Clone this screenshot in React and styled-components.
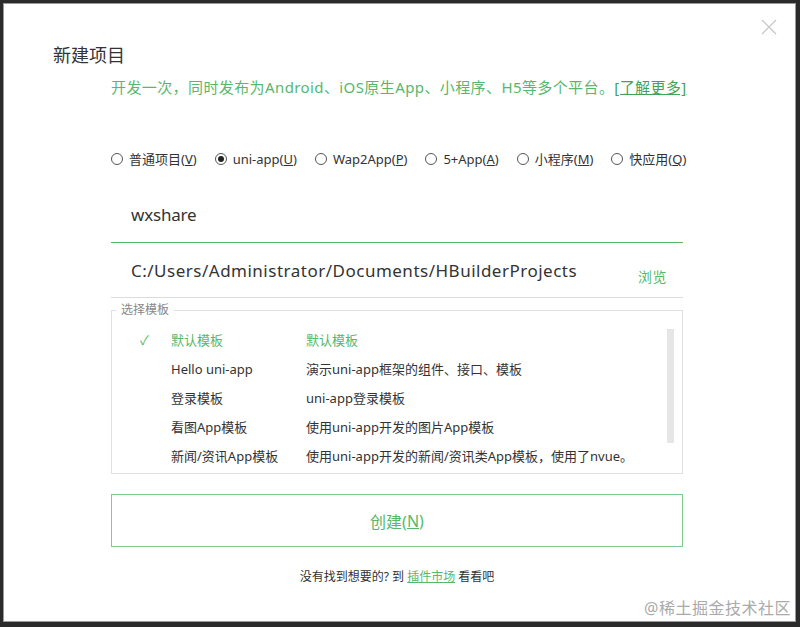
import React from 'react';
import styled, { createGlobalStyle } from 'styled-components';

const GREEN = '#56b86c';
const FONT = `"Noto Sans", "Noto Sans CJK SC", sans-serif`;

const radios = [
  { label: '普通项目', key: 'V' },
  { label: 'uni-app', key: 'U', checked: true },
  { label: 'Wap2App', key: 'P' },
  { label: '5+App', key: 'A' },
  { label: '小程序', key: 'M' },
  { label: '快应用', key: 'Q' },
];

const templates = [
  { name: '默认模板', desc: '默认模板', active: true },
  { name: 'Hello uni-app', desc: '演示uni-app框架的组件、接口、模板' },
  { name: '登录模板', desc: 'uni-app登录模板' },
  { name: '看图App模板', desc: '使用uni-app开发的图片App模板' },
  { name: '新闻/资讯App模板', desc: '使用uni-app开发的新闻/资讯类App模板，使用了nvue。' },
];

export default function App() {
  return (
    <>
      <GlobalStyle />
      <Frame>
        <Dialog>
          <CloseButton>
            <svg width="16" height="16" viewBox="0 0 16 16">
              <path d="M1 1 L15 15 M15 1 L1 15" stroke="#c8c8c8" strokeWidth="1.3" fill="none" />
            </svg>
          </CloseButton>
          <Title>新建项目</Title>
          <Body>
            <Intro>
              开发一次，同时发布为Android、iOS原生App、小程序、H5等多个平台。<MoreLink>[了解更多]</MoreLink>
            </Intro>
            <RadioRow>
              {radios.map((r) => (
                <RadioItem key={r.key}>
                  <RadioDot checked={r.checked} />
                  <span>
                    {r.label}(<u>{r.key}</u>)
                  </span>
                </RadioItem>
              ))}
            </RadioRow>
            <Field focused>
              <FieldText>wxshare</FieldText>
            </Field>
            <Field>
              <FieldText wide>C:/Users/Administrator/Documents/HBuilderProjects</FieldText>
              <Browse>浏览</Browse>
            </Field>
            <TemplateBox>
              <Legend>选择模板</Legend>
              <TemplateList>
                {templates.map((t) => (
                  <TemplateRow key={t.name} active={t.active}>
                    <Check>{t.active ? '✓' : ''}</Check>
                    <NameCell>{t.name}</NameCell>
                    <span>{t.desc}</span>
                  </TemplateRow>
                ))}
              </TemplateList>
              <ScrollThumb />
            </TemplateBox>
            <CreateButton>
              创建(<u>N</u>)
            </CreateButton>
            <Footer>
              没有找到想要的? 到 <MarketLink>插件市场</MarketLink> 看看吧
            </Footer>
          </Body>
          <Watermark>@稀土掘金技术社区</Watermark>
        </Dialog>
      </Frame>
    </>
  );
}

const GlobalStyle = createGlobalStyle`
  html, body {
    margin: 0;
    padding: 0;
    background: #2b2b2b;
  }
  body {
    font-family: ${FONT};
  }
`;

const Frame = styled.div`
  width: 800px;
  height: 627px;
  box-sizing: border-box;
  padding: 3px 4px 5px 3px;
  background: #2b2b2b;
`;

const Dialog = styled.div`
  position: relative;
  height: 100%;
  box-sizing: border-box;
  background: #fff;
  border: 1px solid #9a9a9a;
  padding: 39px 0 0 49px;
`;

const CloseButton = styled.div`
  position: absolute;
  top: 15px;
  right: 18px;
  width: 16px;
  height: 16px;
  display: flex;
`;

const Title = styled.div`
  font-size: 18px;
  color: #333;
  line-height: 24px;
`;

const Body = styled.div`
  width: 572px;
  margin-left: 58px;
  display: flex;
  flex-direction: column;
`;

const Intro = styled.div`
  margin-top: 10px;
  font-size: 15px;
  line-height: 20px;
  color: ${GREEN};
  white-space: nowrap;
  letter-spacing: 0.4px;
`;

const MoreLink = styled.span`
  color: #3fa35a;
  text-decoration: underline;
`;

const RadioRow = styled.div`
  margin-top: 53px;
  display: flex;
  align-items: center;
  gap: 18px;
  font-size: 13px;
  color: #333;
  white-space: nowrap;
`;

const RadioItem = styled.label`
  display: flex;
  align-items: center;
  gap: 6px;
  line-height: 18px;
`;

const RadioDot = styled.span`
  width: 12px;
  height: 12px;
  border-radius: 50%;
  border: 1px solid #555;
  box-sizing: border-box;
  display: flex;
  align-items: center;
  justify-content: center;
  &::after {
    content: '';
    width: 6px;
    height: 6px;
    border-radius: 50%;
    background: ${({ checked }) => (checked ? '#222' : 'transparent')};
  }
`;

const Field = styled.div`
  height: ${({ focused }) => (focused ? '56px' : '54px')};
  margin-top: ${({ focused }) => (focused ? '18px' : '0')};
  display: flex;
  align-items: center;
  justify-content: space-between;
  padding: 0 16px 0 20px;
  border-bottom: 1px solid ${({ focused }) => (focused ? GREEN : '#dcdcdc')};
`;

const FieldText = styled.span`
  font-size: 17px;
  color: #333;
  letter-spacing: ${({ wide }) => (wide ? '0.5px' : '-0.2px')};
`;

const Browse = styled.span`
  font-size: 14px;
  color: ${GREEN};
  margin-top: 12px;
  letter-spacing: 0.5px;
`;

const TemplateBox = styled.fieldset`
  position: relative;
  margin: 5px 0 0;
  padding: 8px 0 0;
  height: 171px;
  box-sizing: border-box;
  border: 1px solid #e0e0e0;
`;

const Legend = styled.legend`
  margin-left: 4px;
  padding: 0 5px;
  font-size: 12px;
  color: #888;
  line-height: 14px;
`;

const TemplateList = styled.div`
  display: flex;
  flex-direction: column;
`;

const TemplateRow = styled.div`
  display: flex;
  align-items: center;
  height: 29px;
  font-size: 13px;
  white-space: nowrap;
  color: ${({ active }) => (active ? GREEN : '#333')};
`;

const Check = styled.span`
  width: 59px;
  padding-left: 28px;
  box-sizing: border-box;
  font-size: 13px;
  color: ${GREEN};
`;

const NameCell = styled.span`
  width: 135px;
`;

const ScrollThumb = styled.div`
  position: absolute;
  right: 8px;
  top: 12px;
  width: 7px;
  height: 114px;
  background: #e6e6e6;
`;

const CreateButton = styled.div`
  margin-top: 20px;
  height: 53px;
  box-sizing: border-box;
  border: 1px solid #7ccc8f;
  display: flex;
  align-items: center;
  justify-content: center;
  font-size: 16px;
  color: ${GREEN};
`;

const Footer = styled.div`
  margin-top: 20px;
  text-align: center;
  font-size: 12px;
  color: #333;
`;

const MarketLink = styled.span`
  color: ${GREEN};
  text-decoration: underline;
`;

const Watermark = styled.div`
  position: absolute;
  right: 4px;
  bottom: 2px;
  font-size: 16px;
  color: #aaa;
  letter-spacing: 0.5px;
`;
